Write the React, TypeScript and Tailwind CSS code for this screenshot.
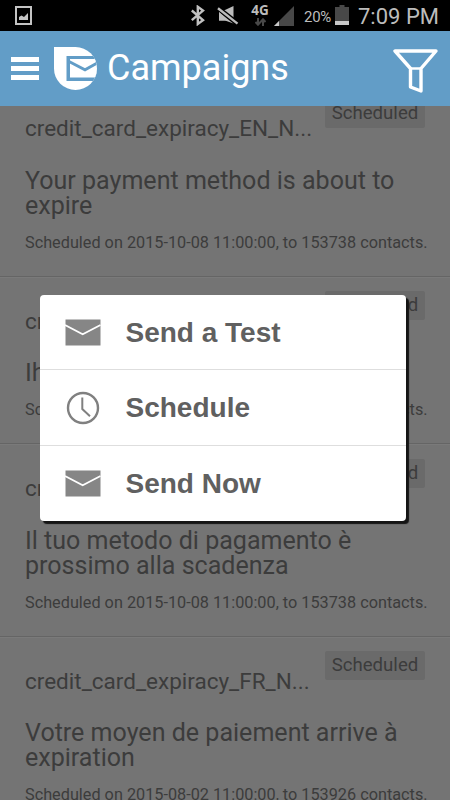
import { FC } from 'react';
import clsx from 'clsx';

interface Campaign {
  name: string;
  subject: string[];
  date: string;
  contacts: number;
}

const campaigns: Campaign[] = [
  {
    name: 'credit_card_expiracy_EN_N...',
    subject: ['Your payment method is about to', 'expire'],
    date: '2015-10-08 11:00:00',
    contacts: 153738,
  },
  {
    name: 'credit_card_expiracy_DE_N...',
    subject: ['Ihre Zahlungsmethode läuft ab'],
    date: '2015-10-08 11:00:00',
    contacts: 153738,
  },
  {
    name: 'credit_card_expiracy_IT_N...',
    subject: ['Il tuo metodo di pagamento è', 'prossimo alla scadenza'],
    date: '2015-10-08 11:00:00',
    contacts: 153738,
  },
  {
    name: 'credit_card_expiracy_FR_N...',
    subject: ['Votre moyen de paiement arrive à', 'expiration'],
    date: '2015-08-02 11:00:00',
    contacts: 153926,
  },
];

const MailIcon: FC = () => (
  <svg className="w-[36px] h-[27px]" viewBox="0 0 36 27">
    <rect x="0.5" y="0.5" width="35" height="26" fill="#868686" />
    <path d="M0 6 L17.7 15.2 L35.5 6" fill="none" stroke="#fff" strokeWidth="1.8" />
  </svg>
);

const ClockIcon: FC = () => (
  <svg className="w-[36px] h-[34px]" viewBox="0 0 36 34" fill="none" stroke="#808080">
    <circle cx="18" cy="17" r="15" strokeWidth="2.4" />
    <path d="M17.3 6.5V18L25 25.2" strokeWidth="2" />
  </svg>
);

const actions = [
  { label: 'Send a Test', icon: <MailIcon />, row: 'h-[75px] border-b' },
  { label: 'Schedule', icon: <ClockIcon />, row: 'h-[76px] border-b' },
  { label: 'Send Now', icon: <MailIcon />, row: 'h-[75px]' },
];

const StatusBar: FC = () => (
  <div className="flex h-[31px] shrink-0 bg-black text-[#bcbcbc]">
    <svg className="ml-[15px] mt-[6px] w-[17px] h-[19px]" viewBox="0 0 17 19">
      <rect x="1" y="1" width="15" height="17" fill="none" stroke="#c4c4c4" strokeWidth="2" />
      <path d="M4 14V11L6.5 9.5L9 11L13 7V14Z" fill="#c4c4c4" />
    </svg>
    <svg className="ml-[159px] mt-[5px] w-[15px] h-[21px]" viewBox="0 0 15 21">
      <path d="M0.8 5.5L12 15.2L6.8 19V1.8L12 5.6L0.8 15.2" fill="none" stroke="#c0c0c0" strokeWidth="2.4" />
    </svg>
    <svg className="ml-[11px] mt-[5px] w-[22px] h-[21px]" viewBox="0 0 22 21">
      <path d="M2 5H8L16.5 1V18.5L8 15.5H2Z" fill="#bcbcbc" />
      <path d="M0 2.5L21 19" stroke="#000" strokeWidth="5" />
      <path d="M1 3.3L20.5 18.6" stroke="#bcbcbc" strokeWidth="2.4" />
      <path d="M2 7V15.5H11.5Z" fill="#bcbcbc" />
    </svg>
    <div className="ml-[11px] mt-[4px] flex w-[20px] flex-col items-center">
      <span className="font-['Open_Sans'] text-[13.5px] font-bold leading-[13px]">4G</span>
      <svg className="mt-[1px] w-[11px] h-[8px]" viewBox="0 0 11 8" fill="none" stroke="#484848" strokeWidth="2">
        <path d="M3 0V6M0.5 4L3 6.7L5.5 4M8 8V2M5.5 4L8 1.3L10.5 4" />
      </svg>
    </div>
    <svg className="ml-[4px] mt-[5px] w-[21px] h-[21px]" viewBox="0 0 21 21">
      <path d="M20 1V21H0Z" fill="#484848" />
      <path d="M5 16V21H0Z" fill="#c8c8c8" />
    </svg>
    <span className="ml-[9px] mt-[7px] w-[30px] whitespace-nowrap font-[Roboto] text-[15px] leading-[20px] tracking-[-0.3px]">20%</span>
    <svg className="ml-[1px] mt-[5px] w-[14px] h-[21px]" viewBox="0 0 14 21">
      <path d="M4.5 0H9.5V2H14V16H0V2H4.5Z" fill="#484848" />
      <rect x="0" y="16" width="14" height="4" fill="#c8c8c8" />
    </svg>
    <span className="ml-[9px] mt-[4px] whitespace-nowrap font-[Roboto] text-[22px] leading-[26px]">7:09 PM</span>
  </div>
);

const Logo: FC = () => (
  <svg className="ml-[15px] mt-[16px] w-[43px] h-[43px]" viewBox="0 0 43 43">
    <clipPath id="leaf">
      <path d="M0 0H21.5A21.5 21.5 0 1 1 0 21.5Z" />
    </clipPath>
    <g clipPath="url(#leaf)">
      <rect width="43" height="43" fill="#fff" />
      <rect x="12.5" y="9" width="31" height="25" fill="#629dc7" />
      <rect x="16" y="12" width="27" height="18.5" fill="#fff" />
      <path d="M15 14.5L31 22.8L44 15.5" fill="none" stroke="#629dc7" strokeWidth="2.8" />
    </g>
  </svg>
);

const Header: FC = () => (
  <header className="flex h-[75px] shrink-0 items-start bg-[#629dc7]">
    <div className="ml-[11px] mt-[26px] flex w-[28px] flex-col gap-[4px]">
      <span className="h-[5px] bg-white" />
      <span className="h-[5px] bg-white" />
      <span className="h-[5px] bg-white" />
    </div>
    <Logo />
    <h1 className="ml-[10px] mt-[15px] font-[Roboto] text-[36px] font-normal leading-[44px] text-white">Campaigns</h1>
    <svg className="ml-auto mr-[12px] mt-[17px] w-[45px] h-[46px]" viewBox="0 0 45 46" fill="none" stroke="#fff" strokeWidth="3.4" strokeLinejoin="round">
      <path d="M2 3H43L28 20.5V43L17.5 39V20.5Z" />
      <path d="M17.5 20.5H28" strokeWidth="2.5" />
    </svg>
  </header>
);

const CampaignRow: FC<{ campaign: Campaign }> = ({ campaign }) => (
  <li className="shrink-0 border-b border-[#656565] px-[25px] pb-[23px] font-[Roboto] text-[#3c3c3c] shadow-[0_1px_0_#7a7a7a]">
    <div className="flex h-[83.5px] items-start pt-[14.5px]">
      <span className="mt-[16.9px] whitespace-nowrap text-[22.5px] leading-[26px]">{campaign.name}</span>
      <span className="ml-auto h-[29px] w-[100px] shrink-0 rounded-[2px] bg-[#6a6a6a] text-center text-[18.6px] leading-[29px]">Scheduled</span>
    </div>
    {campaign.subject.map((line) => (
      <p key={line} className="whitespace-nowrap text-[25.05px] leading-[25px]">{line}</p>
    ))}
    <p className="mt-[15px] h-[20px] whitespace-nowrap text-[16.25px] leading-[20px]">
      Scheduled on {campaign.date}, to {campaign.contacts} contacts.
    </p>
  </li>
);

const ActionMenu: FC = () => (
  <div className="absolute left-[40px] top-[295px] w-[366px] rounded-[4px] bg-white shadow-[3px_3px_1px_#151515]">
    {actions.map(({ label, icon, row }) => (
      <button
        key={label}
        className={clsx('flex w-full items-center border-[#dedede] pl-[25px] text-left', row)}
      >
        {icon}
        <span className="ml-[24.5px] mt-[1px] font-['Liberation_Sans'] text-[28px] font-bold leading-[32px] text-[#606060]">{label}</span>
      </button>
    ))}
  </div>
);

export default function App() {
  return (
    <div className="relative flex h-[800px] w-[450px] flex-col overflow-hidden bg-[#747474]">
      <StatusBar />
      <Header />
      <main className="min-h-0 flex-1 overflow-hidden">
        <ul className="-mt-[22px] flex flex-col">
          {campaigns.map((campaign) => (
            <CampaignRow key={campaign.name} campaign={campaign} />
          ))}
        </ul>
      </main>
      <ActionMenu />
    </div>
  );
}
